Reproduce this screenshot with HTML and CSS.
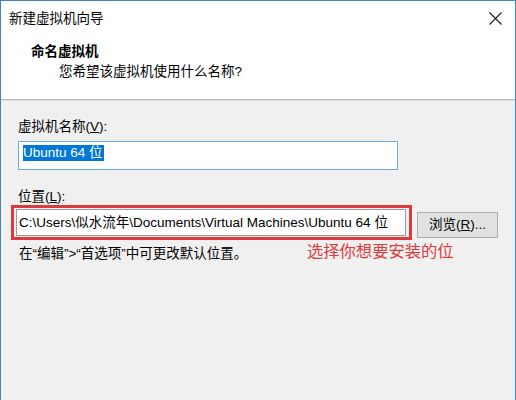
FILE: index.html
```html
<!DOCTYPE html>
<html>
  <head>
    <meta charset="UTF-8">
    <title>新建虚拟机向导</title>
    <link rel="stylesheet" href="styles.css">
  </head>
  <body>
    <div class="window">
      <div class="top">
        <div class="titlebar">
          <span class="title">新建虚拟机向导</span>
          <span class="close">
            <svg width="13" height="13" viewBox="0 0 13 13">
              <path d="M0.5 0.5 L12.5 12.5 M12.5 0.5 L0.5 12.5" stroke="#1a1a1a" stroke-width="1.1" fill="none"/>
            </svg>
          </span>
        </div>
        <div class="header">
          <div class="heading">命名虚拟机</div>
          <div class="subheading">您希望该虚拟机使用什么名称?</div>
        </div>
      </div>

      <div class="content">
        <div class="label">虚拟机名称(<u>V</u>):</div>
        <div class="textbox focused"><span class="selected">Ubuntu 64 位</span></div>

        <div class="label second">位置(<u>L</u>):</div>
        <div class="location-row">
          <div class="mark">
            <div class="textbox path">C:\Users\似水流年\Documents\Virtual Machines\Ubuntu 64 位</div>
          </div>
          <div class="button">浏览(<u>R</u>)...</div>
        </div>
        <div class="hint-row">
          <span class="hint">在“编辑”&gt;“首选项”中可更改默认位置。</span>
          <span class="note">选择你想要安装的位</span>
        </div>
      </div>
    </div>
  </body>
</html>
```

FILE: styles.css
```css
* { margin: 0; padding: 0; box-sizing: border-box; }
body { font-family: "Liberation Sans", "Noto Sans CJK SC", sans-serif; font-size: 13.5px; color: #000; background: #f0f0f0; }

.window { width: 516px; height: 400px; border: 1px solid #3f86b8; border-bottom: none; background: #f0f0f0; }

.top { background: #fff; border-bottom: 1px solid #bdbdbd; box-shadow: 0 1px 0 #dedede; height: 99px; }
.titlebar { display: flex; justify-content: space-between; align-items: center; height: 35px; padding: 0 13px 0 8px; }
.title { line-height: 18px; }
.close { display: flex; }

.header { padding: 7px 0 0 30px; }
.heading { font-weight: bold; line-height: 18px; }
.subheading { line-height: 18px; margin-top: 2px; padding-left: 28px; }

.content { padding: 18px 0 0 17px; }
.label { line-height: 18px; }
.label.second { margin-top: 18px; }

.textbox { background: #fff; border: 1px solid #9a9a9a; white-space: nowrap; overflow: hidden; }
.textbox.focused { width: 380px; height: 29px; margin-top: 5px; border-color: #6ea8dd; padding: 3px 0 0 4px; }
.selected { display: inline-block; background: #0078d7; color: #fff; line-height: 16px; padding-right: 1px; }

.location-row { display: flex; align-items: flex-start; margin-top: -1px; }
.mark { margin-left: -7px; border: 3px solid #dc3a3c; padding: 1px 3px 1px 2px; }
.textbox.path { width: 390px; height: 27px; line-height: 25px; padding-left: 2px; }
.button { margin: 7px 0 0 5px; width: 81px; height: 26px; background: #e1e1e1; border: 1px solid #adadad; text-align: center; line-height: 23px; }

.hint-row { display: flex; align-items: flex-start; margin-top: 5px; padding-left: 1px; }
.hint { line-height: 18px; width: 288px; }
.note { color: #e0383a; font-size: 16.3px; line-height: 20px; margin-top: -4px; }
```
